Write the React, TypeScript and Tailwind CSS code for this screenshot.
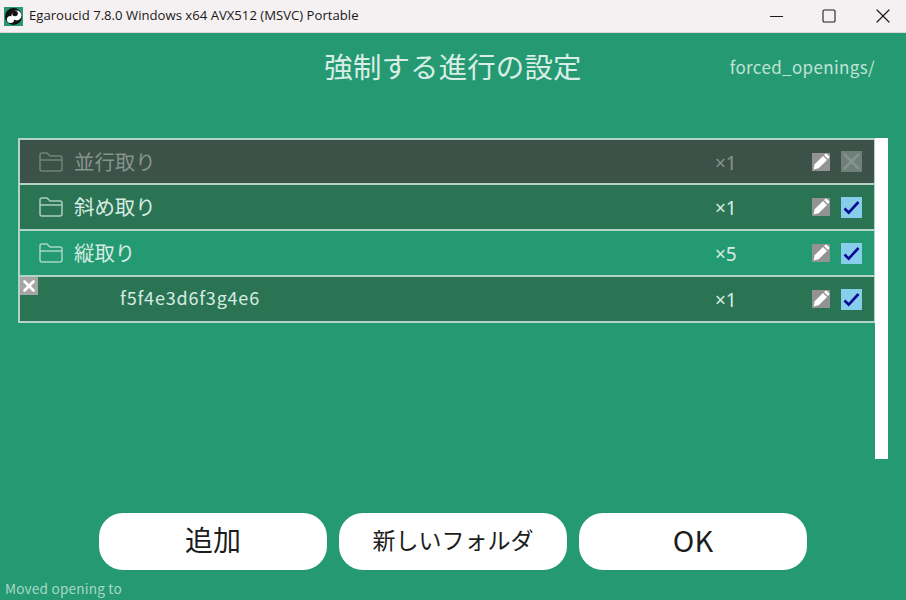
import { Minus, Square, X } from 'lucide-react';

const jp = "font-['Noto_Sans_CJK_JP','Noto_Sans',sans-serif]";

function AppLogo() {
  return (
    <svg width="19" height="19" viewBox="0 0 19 19" className="shrink-0">
      <rect width="19" height="19" fill="#259a72" />
      <circle cx="9.5" cy="9.5" r="8.5" fill="#111" />
      <circle cx="12.5" cy="8.5" r="5" fill="#fff" />
      <circle cx="11" cy="6.5" r="2.8" fill="#111" />
      <circle cx="6.5" cy="12.5" r="3.6" fill="#fff" />
    </svg>
  );
}

function FolderIcon() {
  return (
    <svg width="24" height="20" viewBox="0 0 24 20" fill="none" stroke="currentColor" strokeWidth="1.5" className="shrink-0 opacity-75">
      <path d="M1 17V3a2 2 0 0 1 2-2h5l3 3h10a2 2 0 0 1 2 2v11a2 2 0 0 1-2 2H3a2 2 0 0 1-2-2z" />
      <path d="M1 8h22" />
    </svg>
  );
}

function PencilBox() {
  return (
    <div className="flex h-[18px] w-[18px] items-center justify-center bg-[#939393]">
      <svg width="18" height="18" viewBox="0 0 18 18">
        <path d="M1.5 16.5l1.2-5.2L11 3l4 4-8.300 8.300z" fill="#fff" />
        <path d="M12 2l1.200-1.100a1.200 1.200 0 0 1 1.700 0l2.200 2.200a1.200 1.200 0 0 1 0 1.700L16 6z" fill="#fff" />
      </svg>
    </div>
  );
}

function CheckBox({ disabled }: { disabled?: boolean }) {
  if (disabled) {
    return (
      <div className="flex h-[21px] w-[21px] items-center justify-center bg-[#6f7f79]">
        <svg width="21" height="21" viewBox="0 0 21 21" stroke="#87938e" strokeWidth="2.5">
          <path d="M3 3l15 15M18 3L3 18" />
        </svg>
      </div>
    );
  }
  return (
    <div className="flex h-[21px] w-[21px] items-center justify-center bg-[#87ceeb]">
      <svg width="21" height="21" viewBox="0 0 21 21" fill="none" stroke="#0a0a96" strokeWidth="2.6">
        <path d="M3.5 11.500l4.200 4.200L17.500 5" />
      </svg>
    </div>
  );
}

type RowProps = {
  label: string;
  count: string;
  bg: string;
  folder?: boolean;
  disabled?: boolean;
  removable?: boolean;
};

function Row({ label, count, bg, folder, disabled, removable }: RowProps) {
  const color = disabled ? 'text-[#86948e]' : 'text-[#d6ebe3]';
  return (
    <div className={`relative flex h-[46px] items-center border-x-2 border-b-2 border-[#b4d3c8] first:h-[47px] first:border-t-2 ${bg} ${color}`}>
      {removable && (
        <div className="absolute top-0 left-0 flex h-[18px] w-[18px] items-center justify-center bg-[#a5a5a5]">
          <X size={20} strokeWidth={3.5} className="text-white" />
        </div>
      )}
      {folder ? (
        <div className="ml-[19px] flex items-center gap-[11px]">
          <FolderIcon />
          <span className={`${jp} mb-[1px] text-[20.4px] leading-none`}>{label}</span>
        </div>
      ) : (
        <span className={`${jp} mb-[5px] ml-[100px] text-[18px] leading-none tracking-[0.8px]`}>{label}</span>
      )}
      <span className="mt-[3px] ml-auto w-[97px] font-['Noto_Sans',sans-serif] text-[19px] leading-none">{count}</span>
      <div className="mr-[12px] flex w-[50px] items-center justify-between">
        <PencilBox />
        <CheckBox disabled={disabled} />
      </div>
    </div>
  );
}

function ActionButton({ label, size }: { label: string; size: string }) {
  return (
    <button className={`${jp} ${size} flex h-[57px] w-[228px] items-center justify-center rounded-[24px] bg-white pb-[5px] leading-none text-[#1c1c1c]`}>
      {label}
    </button>
  );
}

export default function App() {
  return (
    <div className="flex h-[600px] w-[906px] flex-col overflow-hidden bg-[#259a72]">
      <header className="flex h-[33px] shrink-0 items-center border-b border-[#d9d6d6] bg-[#f5f0f1] pl-[4px] text-[#1a1a1a]">
        <AppLogo />
        <span className="ml-[6px] font-['Open_Sans',sans-serif] text-[13.15px] leading-none">
          Egaroucid 7.8.0 Windows x64 AVX512 (MSVC) Portable
        </span>
        <div className="ml-auto flex items-center gap-[34px] pr-[11px]">
          <Minus size={21} strokeWidth={1.2} />
          <Square size={16} strokeWidth={1.6} />
          <X size={24} strokeWidth={1.2} />
        </div>
      </header>

      <div className="grid h-[66px] shrink-0 grid-cols-[1fr_auto_1fr] items-center">
        <div />
        <h1 className={`${jp} text-[28.4px] leading-none font-normal tracking-[0.2px] text-[#d9eee6]`}>
          強制する進行の設定
        </h1>
        <span className={`${jp} pr-[31px] text-right text-[17px] leading-none tracking-[0.35px] text-[#c0e3d6]`}>
          forced_openings/
        </span>
      </div>

      <div className="mt-[39px] ml-[18px] flex items-start">
        <div className="w-[858px]">
          <Row label="並行取り" count="×1" bg="bg-[#3c5148]" folder disabled />
          <Row label="斜め取り" count="×1" bg="bg-[#2a7353]" folder />
          <Row label="縦取り" count="×5" bg="bg-[#239a71]" folder />
          <Row label="f5f4e3d6f3g4e6" count="×1" bg="bg-[#2a7353]" removable />
        </div>
        <div className="relative -ml-[1px] h-[321px] w-[13px] bg-white" />
      </div>

      <div className="mt-[54px] flex justify-center gap-[12px]">
        <ActionButton label="追加" size="text-[28px]" />
        <ActionButton label="新しいフォルダ" size="text-[23px]" />
        <ActionButton label="OK" size="text-[29px]" />
      </div>

      <p className={`${jp} mt-[9px] ml-[5px] text-[13.6px] leading-[18px] tracking-[0.2px] text-[#a8d8c6]`}>
        Moved opening to
      </p>
    </div>
  );
}
